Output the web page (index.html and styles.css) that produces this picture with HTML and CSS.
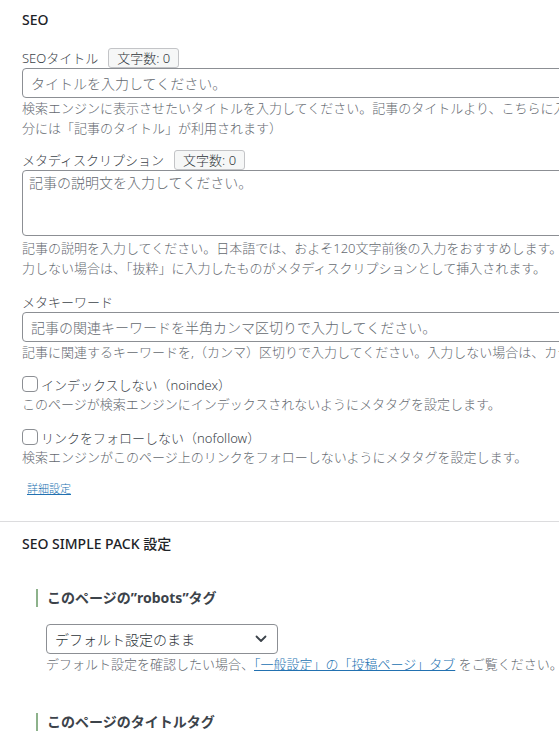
FILE: index.html
```html
<!DOCTYPE html>
<html lang="ja">
<head>
<meta charset="utf-8">
<title>SEO</title>
<link rel="stylesheet" href="styles.css">
</head>
<body>
<div class="page">
  <section class="box box-seo">
    <h2 class="box-title">SEO</h2>

    <div class="field field-title">
      <div class="label-row"><label class="label">SEOタイトル</label><span class="count">文字数: 0</span></div>
      <input class="text-input" type="text" placeholder="タイトルを入力してください。">
      <p class="desc">検索エンジンに表示させたいタイトルを入力してください。記事のタイトルより、こちらに入力したテキストが優先的に挿入されます。（未入力の部<br>分には「記事のタイトル」が利用されます）</p>
    </div>

    <div class="field field-desc">
      <div class="label-row"><label class="label">メタディスクリプション</label><span class="count">文字数: 0</span></div>
      <textarea class="text-area" placeholder="記事の説明文を入力してください。"></textarea>
      <p class="desc desc-after-area">記事の説明を入力してください。日本語では、およそ120文字前後の入力をおすすめします。入<br>力しない場合は、「抜粋」に入力したものがメタディスクリプションとして挿入されます。</p>
    </div>

    <div class="field field-keywords">
      <div class="label-row"><label class="label">メタキーワード</label></div>
      <input class="text-input" type="text" placeholder="記事の関連キーワードを半角カンマ区切りで入力してください。">
      <p class="desc">記事に関連するキーワードを,（カンマ）区切りで入力してください。入力しない場合は、カテゴリ名などから自動で取得されます。</p>
    </div>

    <div class="field field-check">
      <label class="check-row"><input class="check" type="checkbox"><span>インデックスしない（noindex）</span></label>
      <p class="desc">このページが検索エンジンにインデックスされないようにメタタグを設定します。</p>
    </div>

    <div class="field field-check2">
      <label class="check-row"><input class="check" type="checkbox"><span>リンクをフォローしない（nofollow）</span></label>
      <p class="desc">検索エンジンがこのページ上のリンクをフォローしないようにメタタグを設定します。</p>
    </div>

    <p class="more"><a href="#" class="more-link">詳細設定</a></p>
  </section>

  <section class="box box-ssp">
    <h2 class="box-title">SEO SIMPLE PACK 設定</h2>

    <h3 class="ssp-heading ssp-heading-first">このページの”robots”タグ</h3>
    <div class="ssp-body">
      <div class="select">
        <span class="select-value">デフォルト設定のまま</span>
        <svg class="select-arrow" width="12" height="8" viewBox="0 0 12 8" aria-hidden="true"><path d="M1.5 1.5 L6 6 L10.5 1.5" fill="none" stroke="#3c434a" stroke-width="1.8" stroke-linecap="round" stroke-linejoin="round"/></svg>
      </div>
      <p class="desc">デフォルト設定を確認したい場合、<a href="#" class="inline-link">「一般設定」の「投稿ページ」タブ</a> をご覧ください。</p>
    </div>

    <h3 class="ssp-heading ssp-heading-second">このページのタイトルタグ</h3>
  </section>
</div>
</body>
</html>
```

FILE: styles.css
```css
html, body {
  margin: 0;
  padding: 0;
  background: #ffffff;
  overflow: hidden;
}

body {
  font-family: "Noto Sans", "Noto Sans CJK JP", sans-serif;
  font-size: 13px;
  font-weight: 300;
  color: #3c434a;
}

.page {
  width: 100%;
  overflow: hidden;
}

.box {
  padding-left: 22px;
  width: 560px;
}

.box-seo {
  padding-top: 10px;
  padding-bottom: 24px;
  width: 800px;
  border-bottom: 1px solid #dcdcde;
}

.box-ssp {
  padding-top: 12px;
  padding-bottom: 20px;
}

.box-title {
  margin: 0;
  font-size: 14px;
  line-height: 20px;
  font-weight: 500;
  color: #1d2327;
}

.field-title { margin-top: 18px; width: 556px; }
.field-desc { margin-top: 12px; width: 556px; }
.field-keywords { margin-top: 14px; width: 556px; }
.field-check { margin-top: 12px; }
.field-check2 { margin-top: 13px; }

.label-row {
  display: flex;
  align-items: center;
  height: 20px;
}

.label {
  font-size: 13px;
  line-height: 20px;
  color: #3c434a;
}

.count {
  margin-left: 10px;
  height: 20px;
  box-sizing: border-box;
  padding: 0 8px;
  border: 1px solid #c3c4c7;
  border-radius: 3px;
  background: #f6f7f7;
  font-size: 13px;
  line-height: 18px;
  color: #2c3338;
}

.text-input,
.text-area {
  display: block;
  width: 100%;
  box-sizing: border-box;
  margin: 0;
  border: 1px solid #8c8f94;
  border-radius: 4px;
  background: #fff;
  font-family: "Noto Sans", "Noto Sans CJK JP", sans-serif;
  font-size: 14px;
  font-weight: 300;
  color: #2c3338;
}

.text-input {
  height: 30px;
  padding: 0 8px;
  line-height: 28px;
}

.text-area {
  height: 66px;
  padding: 2px 6px;
  line-height: 20px;
  resize: none;
}

.text-input::placeholder,
.text-area::placeholder {
  color: #646970;
  opacity: 1;
}

.desc {
  margin: 0;
  font-size: 13px;
  line-height: 20px;
  color: #646970;
  white-space: nowrap;
}

.desc-after-area { margin-top: 2px; }

.check-row {
  display: flex;
  align-items: center;
  height: 20px;
  gap: 3px;
  color: #3c434a;
  font-size: 13px;
}

.check {
  appearance: none;
  -webkit-appearance: none;
  width: 16px;
  height: 16px;
  margin: 0;
  box-sizing: border-box;
  border: 1px solid #8c8f94;
  border-radius: 4px;
  background: #fff;
}

.more {
  margin: 14px 0 0 5px;
  font-size: 11px;
  line-height: 16px;
}

.more-link,
.inline-link {
  color: #2271b1;
  text-decoration: underline;
}

.ssp-heading {
  margin: 0 0 0 14px;
  padding-left: 9px;
  border-left: 2px solid #8db28b;
  font-size: 14px;
  line-height: 18px;
  font-weight: 700;
  color: #3c434a;
}

.ssp-heading-first { margin-top: 35px; }
.ssp-heading-second { margin-top: 39px; }

.ssp-body {
  margin-left: 24px;
  margin-top: 17px;
}

.select {
  display: flex;
  align-items: center;
  justify-content: space-between;
  width: 232px;
  height: 30px;
  box-sizing: border-box;
  padding: 0 10px 0 8px;
  border: 1px solid #8c8f94;
  border-radius: 4px;
  background: #fff;
  font-size: 14px;
  color: #2c3338;
}

.select-arrow {
  display: block;
}
```
